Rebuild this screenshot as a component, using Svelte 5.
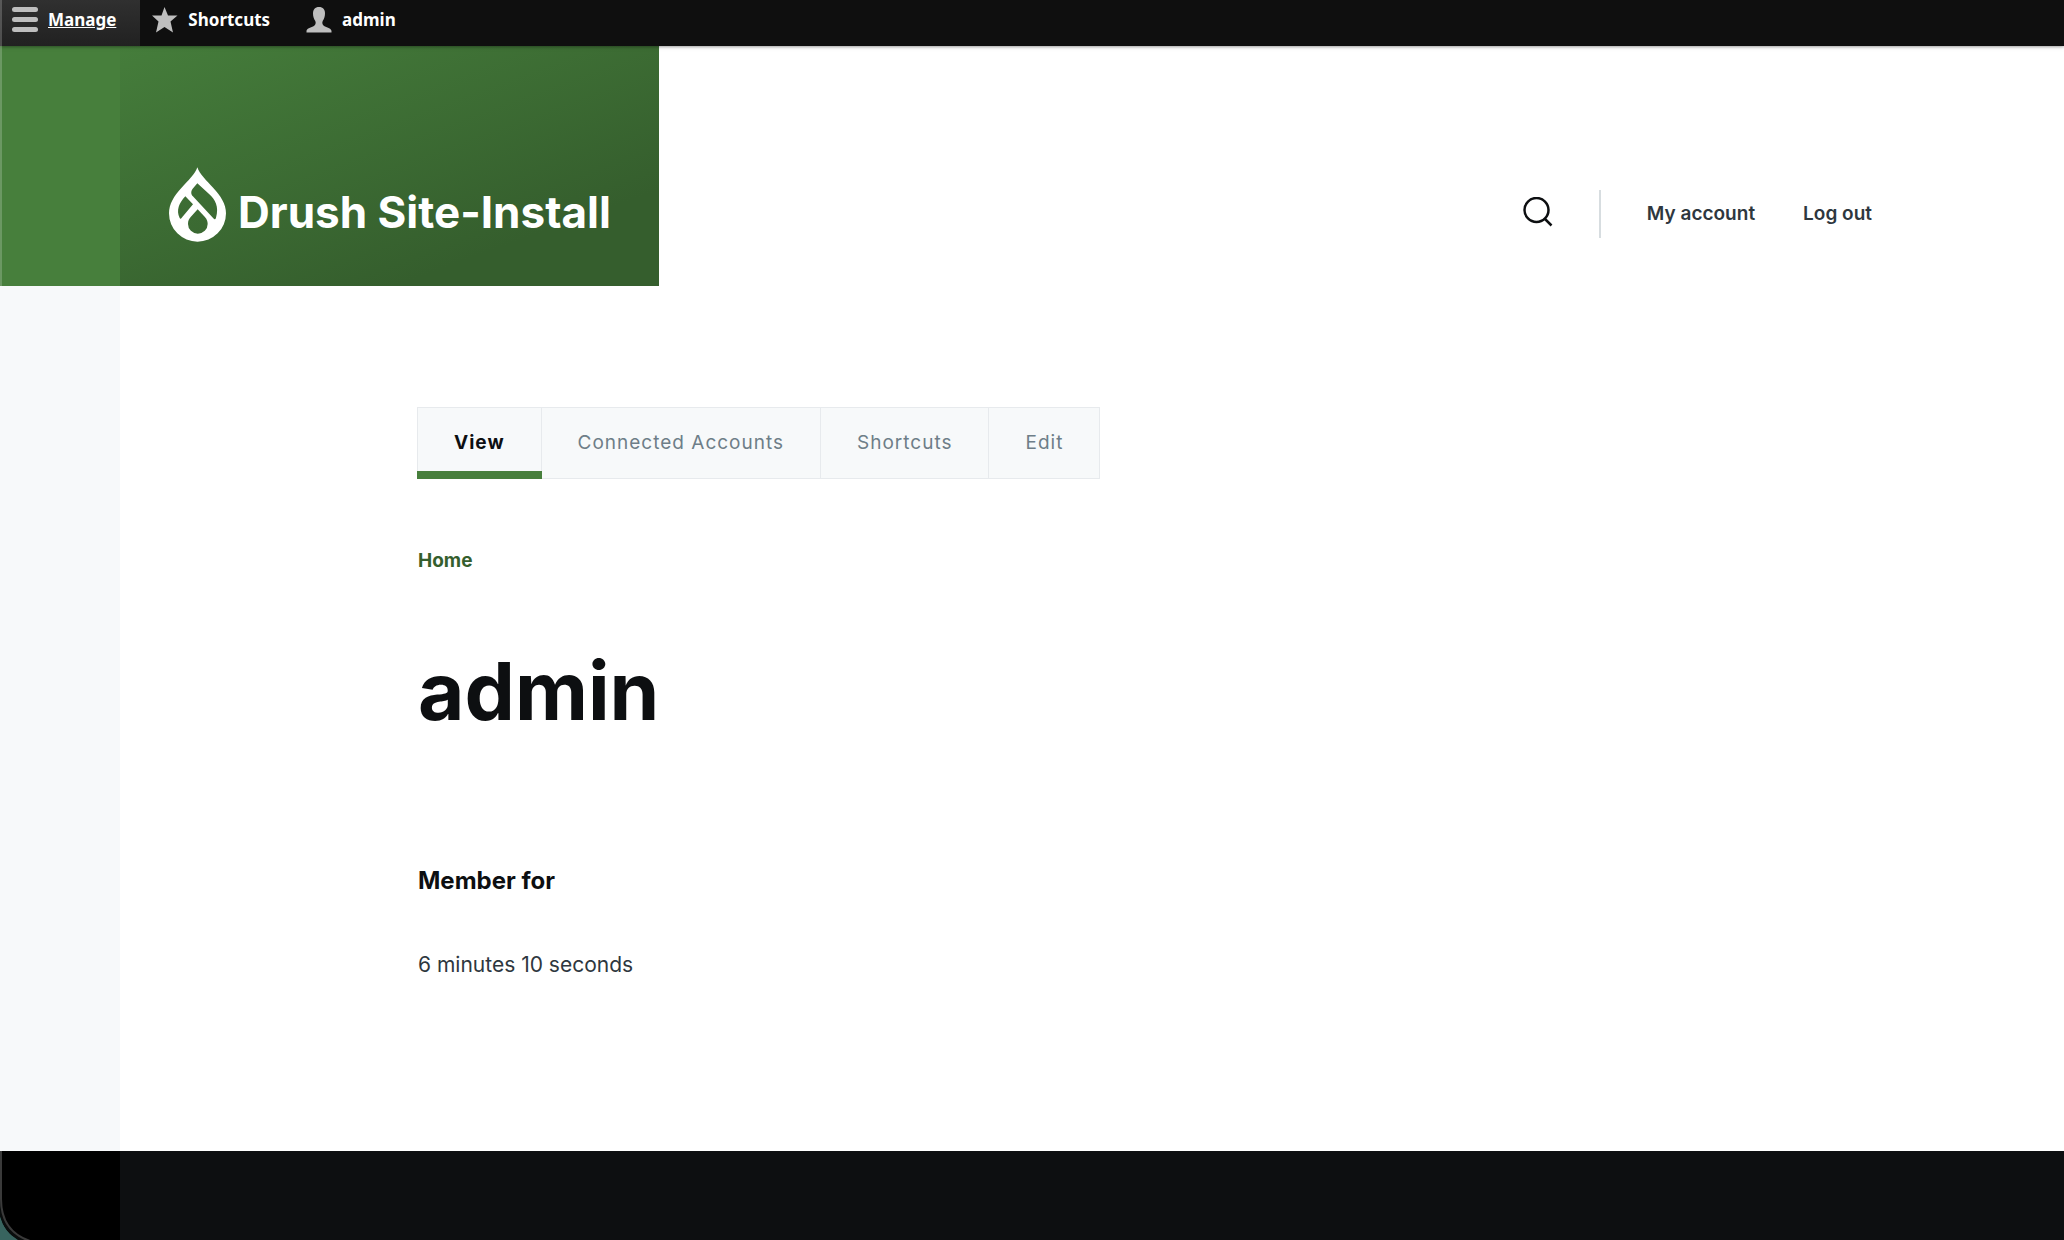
<script lang="ts">
  interface Tab {
    label: string;
    active?: boolean;
  }

  const siteName = 'Drush Site-Install';

  const tabs: Tab[] = [
    { label: 'View', active: true },
    { label: 'Connected Accounts' },
    { label: 'Shortcuts' },
    { label: 'Edit' },
  ];

  const accountLinks = ['My account', 'Log out'];
</script>

<div class="window">
  <nav class="toolbar" aria-label="Administration">
    <a href="#manage" class="toolbar__item toolbar__item--active">
      <svg width="26" height="26" viewBox="0 0 26 26" aria-hidden="true">
        <rect x="0" y="0" width="26" height="5" rx="2.5" />
        <rect x="0" y="10" width="26" height="5" rx="2.5" />
        <rect x="0" y="20" width="26" height="5" rx="2.5" />
      </svg>
      <span>Manage</span>
    </a>
    <a href="#shortcuts" class="toolbar__item">
      <svg width="26" height="26" viewBox="0 0 26 26" aria-hidden="true">
        <path d="M12.500 0L16 8.500H25.500L18.500 14.500L21 25.500L12.500 20L4 25.500L6.500 14.500L0 8.500H9.500Z" />
      </svg>
      <span>Shortcuts</span>
    </a>
    <a href="#user" class="toolbar__item">
      <svg width="26" height="26" viewBox="0 0 26 26" aria-hidden="true">
        <path d="M13 0C9 0 7 2.500 7 6.500C7 9.500 8 12 9.300 14C10.200 16 9.500 18 7.500 19.200C4.500 20.700 0.500 21.500 0.500 24V25.500H25.500V24C25.500 21.500 21.500 20.700 18.500 19.200C16.500 18 15.800 16 16.700 14C18 12 19 9.500 19 6.500C19 2.500 17 0 13 0Z" />
      </svg>
      <span>admin</span>
    </a>
  </nav>

  <div class="page">
    <div class="rail" aria-hidden="true">
      <div class="rail__top"></div>
    </div>

    <div class="page__body">
      <header class="header">
        <a href="#home" class="brand">
          <svg class="brand__logo" width="57" height="75" viewBox="27 22 171 223" aria-hidden="true">
            <path
              fill-rule="evenodd"
              d="M112 22C118 42 140 62 160 84C182 108 198 132 198 160A85.500 85 0 0 1 27 160C27 132 42 108 64 84C84 62 106 42 112 22Z
                M112 70L98 86C92 93 93 103 98 108L160 175C164 180 166 178 168 173C178 140 165 118 148 103Z
                M76 109L99 133L67 171C63 177 61 178 59 174C48 150 57 130 76 109Z
                M113 148L134 170C142 178 143 186 143 192A29.500 29 0 0 1 84 192C84 182 87 177 92 171Z"
            />
          </svg>
          <span>{siteName}</span>
        </a>

        <div class="header__nav">
          <button class="search" aria-label="Search">
            <svg width="30" height="30" viewBox="0 0 30 30" aria-hidden="true">
              <circle cx="13.500" cy="13" r="12" />
              <path d="M21.500 21.500L28.500 28.500" />
            </svg>
          </button>
          <nav class="account" aria-label="User account menu">
            {#each accountLinks as label}
              <a href="#account">{label}</a>
            {/each}
          </nav>
        </div>
      </header>

      <main class="content">
        <nav aria-label="Primary tabs">
          <ul class="tabs">
            {#each tabs as tab}
              <li class="tabs__item">
                <a
                  href="#tab"
                  class="tabs__link"
                  class:tabs__link--active={tab.active}
                  aria-current={tab.active ? 'page' : undefined}
                >{tab.label}</a>
              </li>
            {/each}
          </ul>
        </nav>

        <nav class="breadcrumb" aria-label="Breadcrumb">
          <a href="#home">Home</a>
        </nav>

        <h1>admin</h1>

        <section class="member">
          <h4>Member for</h4>
          <p>6 minutes 10 seconds</p>
        </section>
      </main>
    </div>
  </div>

  <footer class="footer">
    <div class="footer__rail"></div>
    <svg class="corner" width="32" height="89" viewBox="0 0 32 89" aria-hidden="true">
      <path class="corner__outside" d="M0 62C2 76 10 85 20 89H0Z" />
      <path class="corner__rim" d="M0 50C0 72 10 84 26 91" />
      <path class="corner__edge" d="M1 0V48C1 70 12 84 30 90" />
    </svg>
  </footer>
</div>

<style>
  :global(body) {
    margin: 0;
    background: #fff;
  }

  .window {
    position: relative;
    display: flex;
    flex-direction: column;
    min-height: 100vh;
    font-family: Inter, "Liberation Sans", sans-serif;
    color: #0d0f11;
  }

  a {
    color: inherit;
    text-decoration: none;
  }

  .toolbar {
    position: relative;
    display: flex;
    height: 46px;
    background: #0f0f0f;
    box-shadow: 0 0 4px rgba(0, 0, 0, 0.6);
    font-family: "Noto Sans", "Open Sans", sans-serif;
    font-size: 17px;
    font-weight: 700;
    line-height: 40px;
    color: #fff;
  }

  .toolbar__item {
    display: flex;
    gap: 10px;
    padding: 0 24px 0 12px;
  }

  .toolbar__item svg {
    margin-top: 7px;
    fill: #bebebe;
  }

  .toolbar__item--active {
    background: linear-gradient(#303030, #212121);
    text-decoration: underline;
  }

  .page {
    display: flex;
    flex: 1;
  }

  .rail {
    width: 120px;
    background: #f7f9fa;
  }

  .rail__top {
    height: 240px;
    background: #477f3c;
  }

  .page__body {
    flex: 1;
  }

  .header {
    display: flex;
    justify-content: space-between;
    height: 240px;
  }

  .brand {
    display: flex;
    align-items: flex-end;
    gap: 12px;
    box-sizing: border-box;
    padding: 0 48px 44px 49px;
    background: linear-gradient(160deg, #457d3b 0%, #355e2d 78%, #355e2d 100%);
    color: #fff;
    font-size: 44px;
    font-weight: 700;
    line-height: 60px;
  }

  .brand__logo {
    fill: #fff;
  }

  .header__nav {
    display: flex;
    align-items: center;
    height: 48px;
    margin-top: 144px;
    padding-right: 192px;
  }

  .search {
    display: flex;
    margin-bottom: 4px;
    padding: 0;
    border: 0;
    background: none;
    cursor: pointer;
  }

  .search svg {
    fill: none;
    stroke: #0d0f11;
    stroke-width: 2.5;
  }

  .account {
    display: flex;
    gap: 48px;
    margin-left: 46px;
    padding-left: 46px;
    border-left: 2px solid #d7dde0;
    font-size: 19px;
    font-weight: 600;
    line-height: 48px;
    color: #2e373e;
  }

  .content {
    padding: 121px 120px 140px 297px;
  }

  .tabs {
    display: inline-flex;
    margin: 0;
    padding: 0;
    border: 1px solid #e7eaed;
    background: #f7f9fa;
    list-style: none;
    font-size: 19px;
    line-height: 70px;
    color: #6e7e88;
  }

  .tabs__item + .tabs__item {
    border-left: 1px solid #e7eaed;
  }

  .tabs__link {
    position: relative;
    display: block;
    padding: 0 36px;
    letter-spacing: 1px;
  }

  .tabs__link--active {
    color: #0d0f11;
    font-weight: 700;
  }

  .tabs__link--active::after {
    content: "";
    position: absolute;
    right: -1px;
    bottom: -1px;
    left: -1px;
    height: 8px;
    background: #477f3c;
  }

  .breadcrumb {
    margin: 64px 0 0 1px;
    font-size: 19px;
    font-weight: 700;
    line-height: 36px;
    color: #355e2d;
  }

  h1 {
    margin: 64px 0 0 1px;
    font-size: 80px;
    font-weight: 700;
    line-height: 96px;
  }

  .member {
    margin: 124px 0 0 1px;
  }

  h4 {
    margin: 0;
    font-size: 24px;
    font-weight: 700;
    line-height: 36px;
  }

  p {
    margin: 48px 0 0;
    font-size: 21px;
    line-height: 36px;
    color: #2e373e;
  }

  .footer {
    position: relative;
    display: flex;
    height: 89px;
    background: #0d0f11;
  }

  .footer__rail {
    width: 120px;
    background: #000;
  }

  .corner {
    position: absolute;
    bottom: 0;
    left: 0;
  }

  .corner__outside {
    fill: #38645f;
  }

  .corner__rim {
    fill: none;
    stroke: #0a0d0d;
    stroke-width: 4;
  }

  .corner__edge {
    fill: none;
    stroke: #3a3a3a;
    stroke-width: 2;
  }

  /* light edge running down the left side of the window */
  .window::before {
    content: "";
    position: absolute;
    z-index: 1;
    top: 0;
    left: 0;
    width: 2px;
    height: 286px;
    background: rgba(255, 255, 255, 0.2);
  }
</style>
